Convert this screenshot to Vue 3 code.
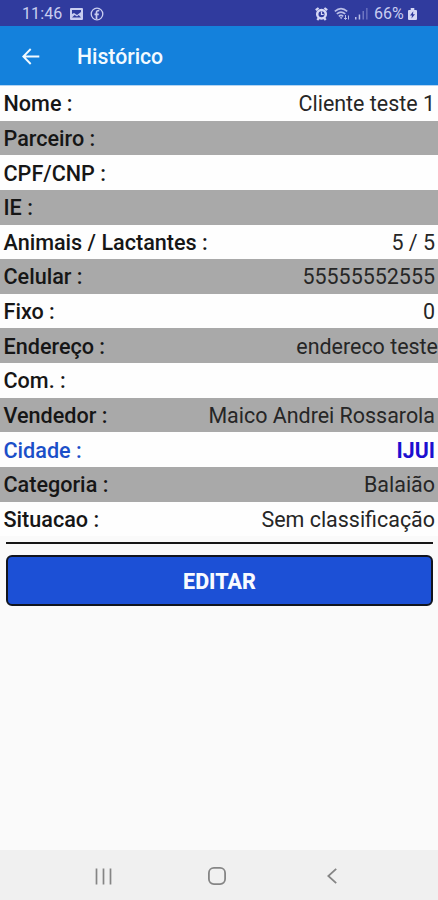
<script setup>
const rows = [
  { label: 'Nome :', value: 'Cliente teste 1' },
  { label: 'Parceiro :', value: '' },
  { label: 'CPF/CNP :', value: '' },
  { label: 'IE :', value: '' },
  { label: 'Animais / Lactantes :', value: '5 / 5' },
  { label: 'Celular :', value: '55555552555' },
  { label: 'Fixo :', value: '0' },
  { label: 'Endereço :', value: 'endereco teste', flush: true },
  { label: 'Com. :', value: '' },
  { label: 'Vendedor :', value: 'Maico Andrei Rossarola' },
  { label: 'Cidade :', value: 'IJUI', link: true },
  { label: 'Categoria :', value: 'Balaião' },
  { label: 'Situacao :', value: 'Sem classificação' },
]
</script>

<template>
  <div class="screen">
    <div class="status">
      <span class="time">11:46</span>
      <svg class="photo" width="13" height="12" viewBox="0 0 13 12">
        <path fill="#c9cdf0" fill-rule="evenodd" d="M1 0h11a1 1 0 0 1 1 1v10a1 1 0 0 1-1 1H1a1 1 0 0 1-1-1V1a1 1 0 0 1 1-1zM2 2v4l2-1 3 2 4-3V2zM2 9.500h9L8.800 7 7 8.500 4.500 7z" />
      </svg>
      <svg class="face" width="14" height="14" viewBox="0 0 14 14" fill="none" stroke="#c9cdf0">
        <circle cx="7" cy="7" r="5.800" stroke-width="1.300" />
        <path d="M6.500 12V5.300Q6.500 3.300 9.300 3.600M4.500 7.300h4.300" stroke-width="1.700" />
      </svg>
      <span class="gap"></span>
      <svg class="alarm" width="13" height="14" viewBox="0 0 13 14">
        <path d="M.8 3.200 3.600 1M12.200 3.200 9.400 1M2.300 13l1.700-2.200M10.700 13l-1.700-2.200" stroke="#d5d8f5" stroke-width="2.200" />
        <circle cx="6.500" cy="7.200" r="4.300" fill="none" stroke="#d5d8f5" stroke-width="2.500" />
        <path d="M6.500 4.500v3h2.200" fill="none" stroke="#d5d8f5" stroke-width="1.200" />
      </svg>
      <svg class="wifi" width="16" height="14" viewBox="0 0 16 14" fill="none" stroke="#b9bee8" stroke-width="1.600">
        <path d="M.8 4.300Q7 -1.200 13.200 4.300M2.800 6.900Q7 3.200 11.200 6.900M4.800 9.300Q7 7.500 9.200 9.300" />
        <path d="M5.700 10.300h2.800L7.200 12.200z" fill="#b9bee8" stroke="none" />
        <path d="M11.500 8v4.500M10 11l1.500 1.500L13 11M14.500 12.500V8.500" stroke-width="1" />
      </svg>
      <svg class="signal" width="13" height="13" viewBox="0 0 13 13">
        <path fill="#b9bee8" d="M0 10h1.500v2.500H0zM3.700 7.500h1.500v5H3.700z" />
        <path fill="#6f77c2" d="M7.500 4H9v8.500H7.500zM11.200 1h1.300v11.500h-1.300z" />
      </svg>
      <span class="pct">66%</span>
      <svg class="battery" width="9" height="12" viewBox="0 0 9 12">
        <path fill="#d5d8f5" d="M2.700 0h3.600v2H8q1 0 1 1v8q0 1-1 1H1q-1 0-1-1V3q0-1 1-1h1.700z" />
        <path fill="#303b9e" d="M5.300 3.300 2 7.500h2l-.5 3L7 6.300H5z" />
      </svg>
    </div>

    <header class="bar">
      <svg width="18" height="17" viewBox="0 0 18 17" fill="none" stroke="#f2faff" stroke-width="1.900">
        <path d="M17.300 8.500H1.500M8.700 1 1.300 8.500l7.400 7.500" />
      </svg>
      <h1>Histórico</h1>
    </header>

    <main>
      <dl class="rows">
        <div v-for="row in rows" :key="row.label" class="row" :class="{ link: row.link, flush: row.flush }">
          <dt>{{ row.label }}</dt>
          <dd>{{ row.value }}</dd>
        </div>
      </dl>
      <div class="rule"></div>
      <button class="edit" type="button">EDITAR</button>
    </main>

    <nav class="nav">
      <svg width="18" height="17" viewBox="0 0 18 17" fill="none" stroke="#858585" stroke-width="1.700">
        <path d="M1.500 .5v16M8.500 .5v16M15.500 .5v16" />
      </svg>
      <svg width="18" height="18" viewBox="0 0 18 18" fill="none" stroke="#858585" stroke-width="1.800">
        <rect x=".9" y=".9" width="16.200" height="16.200" rx="5" />
      </svg>
      <svg width="10" height="16" viewBox="0 0 10 16" fill="none" stroke="#858585" stroke-width="1.800">
        <path d="M9.200 .8 1.300 8l7.900 7.200" />
      </svg>
    </nav>
  </div>
</template>

<style>
body {
  margin: 0;
}
</style>

<style scoped>
.screen {
  display: flex;
  flex-direction: column;
  width: 438px;
  height: 900px;
  overflow: hidden;
  background: #fafafa;
  font-family: Roboto, "Liberation Sans", sans-serif;
  color: #161616;
}
.status {
  display: flex;
  align-items: center;
  box-sizing: border-box;
  height: 26px;
  padding: 1px 21px 0 22px;
  background: #303b9e;
  color: #c9cdf0;
  font-size: 16px;
}
.time {
  width: 48px;
  letter-spacing: 0.1px;
}
.face {
  margin-left: 7px;
}
.gap {
  flex: 1;
}
.wifi {
  margin-left: 6px;
}
.signal {
  margin-left: 5px;
}
.pct {
  width: 30px;
  margin-left: 6px;
  white-space: nowrap;
}
.battery {
  margin-left: 4px;
}
.bar {
  display: flex;
  align-items: center;
  gap: 37px;
  box-sizing: border-box;
  height: 59px;
  padding: 1px 0 0 22px;
  background: #1481dc;
}
.bar h1 {
  margin: 0;
  color: #f2faff;
  font-size: 21.200px;
  font-weight: 500;
}
main {
  flex: 1;
  border-top: 1px solid #b4d4f2;
}
.rows {
  display: grid;
  grid-template-rows: repeat(13, 34.640px);
  margin: 0;
  background: #fefefe;
}
.row {
  display: flex;
  align-items: center;
  justify-content: space-between;
  padding: 1px 3px 0 3.500px;
  font-size: 21.600px;
  white-space: nowrap;
}
.row:nth-child(even) {
  background: #a9a9a9;
}
.row dt {
  font-weight: 500;
}
.row dd {
  margin: 0;
  color: #262626;
  font-size: 21.450px;
  font-weight: 400;
}
.row.flush {
  padding-right: 0;
}
.row.link dt {
  color: #1b4fc8;
}
.row.link dd {
  color: #1d0fd0;
  font-size: 21.300px;
  font-weight: 700;
}
.rule {
  height: 2px;
  margin: 6px 5px 0 6px;
  background: #161616;
}
.edit {
  display: block;
  box-sizing: border-box;
  width: 427px;
  height: 51px;
  margin: 11px 0 0 6px;
  padding: 1px 0 0;
  border: 2px solid #11151f;
  border-radius: 6px;
  background: #1c50d6;
  color: #f8faff;
  font: 800 21.500px Roboto, "Liberation Sans", sans-serif;
}
.nav {
  display: flex;
  align-items: center;
  box-sizing: border-box;
  height: 50px;
  padding: 2px 0 0 95px;
  background: #f0f0f0;
}
.nav svg:nth-child(2) {
  margin-left: 95px;
}
.nav svg:nth-child(3) {
  margin-left: 101px;
}
</style>
